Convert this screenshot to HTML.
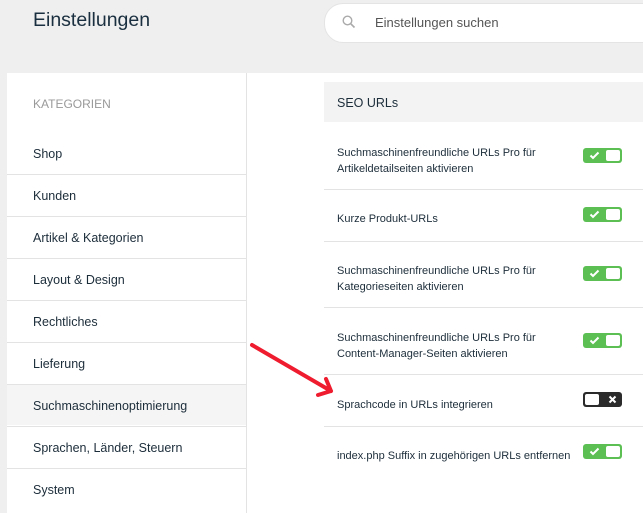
<!DOCTYPE html>
<html><head><meta charset="utf-8"><style>
body{margin:0;width:643px;height:511px;background:#efefef;font-family:"Liberation Sans",sans-serif;position:relative;overflow:hidden;color:#1c2d3a}
.abs{position:absolute}
h1{position:absolute;left:33px;top:9px;margin:0;font-weight:normal;font-size:19.5px;color:#1a2f3f}
.search{position:absolute;left:324px;top:3px;width:340px;height:38px;background:#fff;border-radius:19px;border:1px solid #e4e4e4}
.search span{position:absolute;left:50px;top:11px;font-size:13px;color:#555}
.side{position:absolute;left:7px;top:73px;width:239px;height:440px;background:#fff;border-right:1px solid #e3e3e3}
.side .h{position:absolute;left:26px;top:24px;font-size:12px;color:#999}
.it{position:absolute;left:0;width:239px;height:41px;border-top:1px solid #e3e3e3;font-size:12.5px;line-height:43px;padding-left:26px;box-sizing:border-box}
.main{position:absolute;left:247px;top:73px;width:396px;height:440px;background:#fff}
.seo{position:absolute;left:324px;top:82px;width:319px;height:40px;background:#f3f3f3;font-size:12.5px;line-height:42px;padding-left:13px;box-sizing:border-box}
.row{position:absolute;left:337px;font-size:11px;line-height:16px;color:#1c2d3a}
.sep{position:absolute;left:324px;width:319px;height:1px;background:#e3e3e3}
.tg{position:absolute;left:583px;width:39px;height:15px;border-radius:3px;background:#5cbf53}
.tg::after{content:"";position:absolute;right:2px;top:2px;width:14px;height:11px;background:#fff;border-radius:2px}
.tg svg{position:absolute;left:6px;top:3px}
.tg.off{background:#2b2b2b}
.tg.off::after{left:2px;right:auto}
.tg.off svg{left:25px}
</style></head><body>
<h1>Einstellungen</h1>
<div class="search"><svg class="abs" style="left:17px;top:11px" width="14" height="14" viewBox="0 0 14 14"><circle cx="5.5" cy="5.5" r="4.3" fill="none" stroke="#aaa" stroke-width="1.4"/><path d="M8.7 8.7L12.5 12.5" stroke="#aaa" stroke-width="1.6"/></svg><span>Einstellungen suchen</span></div>
<div class="side"><div class="h">KATEGORIEN</div>
<div class="it" style="top:60px;border-top:none">Shop</div>
<div class="it" style="top:101px">Kunden</div>
<div class="it" style="top:143px">Artikel &amp; Kategorien</div>
<div class="it" style="top:185px">Layout &amp; Design</div>
<div class="it" style="top:227px">Rechtliches</div>
<div class="it" style="top:269px">Lieferung</div>
<div class="it" style="top:311px;background:#f5f5f5">Suchmaschinenoptimierung</div>
<div class="it" style="top:353px">Sprachen, Länder, Steuern</div>
<div class="it" style="top:395px">System</div>
</div>
<div class="main"></div>
<div class="seo">SEO URLs</div>
<div class="row" style="top:145px">Suchmaschinenfreundliche URLs Pro für<br>Artikeldetailseiten aktivieren</div>
<div class="tg" style="top:148px"><svg width="11" height="9" viewBox="0 0 11 9"><path d="M1.5 4.5L4 7L9.5 1.5" fill="none" stroke="#fff" stroke-width="2"/></svg></div>
<div class="sep" style="top:189px"></div>
<div class="row" style="top:211px">Kurze Produkt-URLs</div>
<div class="tg" style="top:207px"><svg width="11" height="9" viewBox="0 0 11 9"><path d="M1.5 4.5L4 7L9.5 1.5" fill="none" stroke="#fff" stroke-width="2"/></svg></div>
<div class="sep" style="top:241px"></div>
<div class="row" style="top:263px">Suchmaschinenfreundliche URLs Pro für<br>Kategorieseiten aktivieren</div>
<div class="tg" style="top:266px"><svg width="11" height="9" viewBox="0 0 11 9"><path d="M1.5 4.5L4 7L9.5 1.5" fill="none" stroke="#fff" stroke-width="2"/></svg></div>
<div class="sep" style="top:307px"></div>
<div class="row" style="top:330px">Suchmaschinenfreundliche URLs Pro für<br>Content-Manager-Seiten aktivieren</div>
<div class="tg" style="top:333px"><svg width="11" height="9" viewBox="0 0 11 9"><path d="M1.5 4.5L4 7L9.5 1.5" fill="none" stroke="#fff" stroke-width="2"/></svg></div>
<div class="sep" style="top:374px"></div>
<div class="row" style="top:397px">Sprachcode in URLs integrieren</div>
<div class="tg off" style="top:392px"><svg width="9" height="9" viewBox="0 0 9 9"><path d="M1.5 1.5L7.5 7.5M7.5 1.5L1.5 7.5" fill="none" stroke="#fff" stroke-width="2"/></svg></div>
<div class="sep" style="top:426px"></div>
<div class="row" style="top:448px">index.php Suffix in zugehörigen URLs entfernen</div>
<div class="tg" style="top:444px"><svg width="11" height="9" viewBox="0 0 11 9"><path d="M1.5 4.5L4 7L9.5 1.5" fill="none" stroke="#fff" stroke-width="2"/></svg></div>
<svg class="abs" style="left:0;top:0" width="643" height="511"><path d="M252 345L331 391M326 379L331 391L318 395" fill="none" stroke="#ee1c2e" stroke-width="4" stroke-linecap="round" stroke-linejoin="round"/></svg>
</body></html>
